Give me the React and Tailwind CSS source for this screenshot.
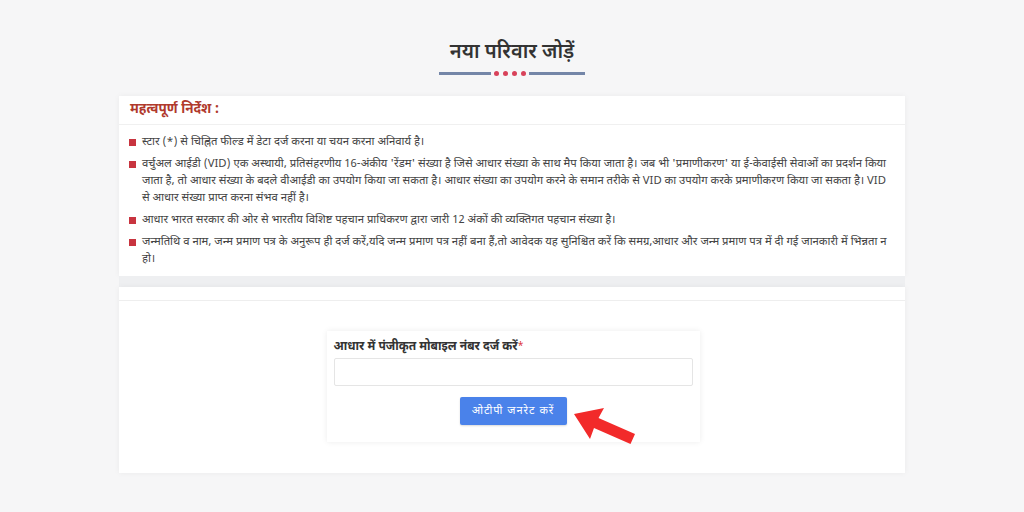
import React from 'react'

const items = [
  'स्टार (*) से चिह्नित फील्ड में डेटा दर्ज करना या चयन करना अनिवार्य है।',
  "वर्चुअल आईडी (VID) एक अस्थायी, प्रतिसंहरणीय 16-अंकीय 'रेंडम' संख्या है जिसे आधार संख्या के साथ मैप किया जाता है। जब भी 'प्रमाणीकरण' या ई-केवाईसी सेवाओं का प्रदर्शन किया जाता है, तो आधार संख्या के बदले वीआईडी का उपयोग किया जा सकता है। आधार संख्या का उपयोग करने के समान तरीके से VID का उपयोग करके प्रमाणीकरण किया जा सकता है। VID से आधार संख्या प्राप्त करना संभव नहीं है।",
  'आधार भारत सरकार की ओर से भारतीय विशिष्ट पहचान प्राधिकरण द्वारा जारी 12 अंकों की व्यक्तिगत पहचान संख्या है।',
  'जन्मतिथि व नाम, जन्म प्रमाण पत्र के अनुरूप ही दर्ज करें,यदि जन्म प्रमाण पत्र नहीं बना हैं,तो आवेदक यह सुनिश्चित करें कि समग्र,आधार और जन्म प्रमाण पत्र में दी गई जानकारी में भिन्नता न हो।',
]

export default function App() {
  return (
    <div
      className="w-[1024px] h-[512px] overflow-hidden bg-[#f6f6f7] flex flex-col items-center"
      style={{ fontFamily: '"Noto Sans Devanagari", "Noto Sans", "Liberation Sans", sans-serif' }}
    >
      {/* Title */}
      <h1 className="mt-[38px] text-[20px] leading-[30px] font-semibold text-[#333]">नया परिवार जोड़ें</h1>
      <div className="mt-[3px] flex items-center">
        <div className="w-[52px] h-[3px] bg-[#7486a8]" />
        <div className="flex gap-[4px] px-[3px]">
          <span className="w-[5px] h-[5px] rounded-full bg-[#d8425a]" />
          <span className="w-[5px] h-[5px] rounded-full bg-[#d8425a]" />
          <span className="w-[5px] h-[5px] rounded-full bg-[#d8425a]" />
          <span className="w-[5px] h-[5px] rounded-full bg-[#d8425a]" />
        </div>
        <div className="w-[56px] h-[3px] bg-[#7486a8]" />
      </div>

      {/* Instructions card */}
      <div className="mt-[20px] w-[786px] bg-white shadow-[0_0_6px_rgba(0,0,0,0.05)]">
        <div className="h-[29px] px-[11px] flex items-center border-b border-[#f0f0f0]">
          <span className="text-[13.5px] font-bold text-[#b0392c]">महत्वपूर्ण निर्देश :</span>
        </div>
        <ul className="pt-[9px] pb-[8px] pl-[10px] pr-[14px] flex flex-col gap-[5px]">
          {items.map((t, i) => (
            <li key={i} className="flex items-start text-[11.3px] leading-[17px] text-[#444]">
              <span className="mt-[5px] w-[7px] h-[7px] bg-[#c8343f] shrink-0" />
              <span className="ml-[6px]">{t}</span>
            </li>
          ))}
        </ul>
      </div>

      <div className="w-[786px] h-[11px] bg-[#eeeff1]" />

      {/* Form card */}
      <div className="w-[786px] h-[186px] bg-white shadow-[0_0_6px_rgba(0,0,0,0.05)] flex flex-col">
        <div className="h-[14px] border-b border-[#eeeeee]" />
        <div className="flex justify-center pt-[30px] pl-[2px]">
          <div className="relative w-[373px] h-[111px] bg-white shadow-[0_0_6px_rgba(0,0,0,0.08)] px-[7px] pt-[7px]">
            <div className="text-[12px] leading-[18px] font-bold text-[#333]">
              आधार में पंजीकृत मोबाइल नंबर दर्ज करें<span className="text-[#d33] font-normal text-[10px] align-top">*</span>
            </div>
            <input
              type="text"
              className="mt-[2px] w-[359px] h-[28px] border border-[#e5e5e5] rounded-[2px] outline-none"
            />
            <div className="mt-[11px] flex justify-center">
              <button className="w-[107px] h-[28px] bg-[#4a82ea] rounded-[2px] text-white text-[11px] tracking-[1px] shadow-[0_1px_2px_rgba(0,0,0,0.15)]">
                ओटीपी जनरेट करें
              </button>
            </div>
            {/* red arrow */}
            <svg className="absolute left-[244px] top-[70px]" width="70" height="50" viewBox="0 0 70 50">
              <polygon points="3,13 33,7 27.5,17 64,33 59.5,43 23,27 19,38" fill="#f22a2a" />
            </svg>
          </div>
        </div>
      </div>
    </div>
  )
}
